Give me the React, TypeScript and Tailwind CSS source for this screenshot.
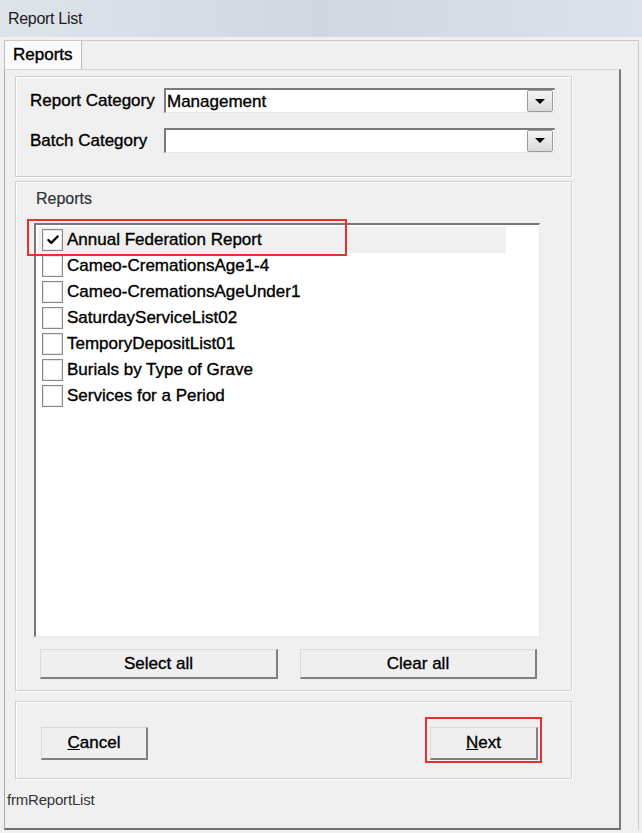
import { Check } from 'lucide-react';

const reports = [
  'Annual Federation Report',
  'Cameo-CremationsAge1-4',
  'Cameo-CremationsAgeUnder1',
  'SaturdayServiceList02',
  'TemporyDepositList01',
  'Burials by Type of Grave',
  'Services for a Period',
];

const groupBox =
  'border border-[#cfcfcf] shadow-[inset_1px_1px_0_#ffffff,1px_1px_0_#ffffff]';

const button3d =
  'flex items-center justify-center bg-[#efefef] border-t border-l border-[#d9d9d9] border-r-2 border-b-2 border-r-[#808080] border-b-[#808080] text-[17px] text-black';

function Combo({ value }: { value: string }) {
  return (
    <div className="flex items-center w-[391px] bg-white border-t-2 border-l-2 border-[#7c7c7c] border-r border-b border-r-[#e6e6e6] border-b-[#e6e6e6]">
      <div className="flex-1 pl-[1px] text-[17px] text-black leading-none">{value}</div>
      <div className="w-[26px] h-[22px] mr-[1px] flex items-center justify-center rounded-[2px] border border-[#9c9c9c] bg-gradient-to-b from-[#f6f6f6] to-[#dadada]">
        <div className="w-0 h-0 border-l-[5px] border-r-[5px] border-t-[5px] border-l-transparent border-r-transparent border-t-black" />
      </div>
    </div>
  );
}

export default function App() {
  const fontStyle = { fontFamily: '"Liberation Sans", Arial, sans-serif' };

  return (
    <div className="relative w-[642px] h-[833px] overflow-hidden bg-[#f0f0f0]" style={fontStyle}>
      {/* Title bar */}
      <div className="h-[37px] flex items-center pl-2 bg-gradient-to-r from-[#dfe4eb] via-[#d1d8e1] to-[#dce2ea] text-[16px] tracking-[-0.3px] text-[#1c1c1c]">
        Report List
      </div>

      {/* Outer panel */}
      <div className="ml-[4px] mt-[3px] w-[635px] h-[790px] flex flex-col border-t border-r border-[#c9c9c9]">
        {/* Tab header */}
        <div className="h-[28px] flex">
          <div className="w-[78px] h-[28px] flex items-center pl-[8px] bg-[#fbfbfb] border-l border-r border-[#bdbdbd] text-[17px] text-black [-webkit-text-stroke:0.4px_#000]">
            Reports
          </div>
        </div>

        {/* Tab page */}
        <div className="w-[617px] flex-1 flex flex-col border-t border-t-[#d4d4d4] border-l border-l-[#a8a8a8] border-r-2 border-r-[#7a7a7a] border-b-2 border-b-[#707070]">
          <div className="flex flex-col [-webkit-text-stroke:0.35px_#000]">
            {/* Categories */}
            <div className={`ml-[10px] mt-[6px] w-[557px] h-[101px] pl-[14px] pt-[11px] flex flex-col gap-[14px] ${groupBox}`}>
              <div className="flex items-center">
                <div className="w-[134px] text-[17px] text-black">Report Category</div>
                <Combo value="Management" />
              </div>
              <div className="flex items-center">
                <div className="w-[134px] text-[17px] text-black">Batch Category</div>
                <Combo value="" />
              </div>
            </div>

            {/* Reports */}
            <div className={`ml-[10px] mt-[4px] w-[557px] h-[510px] flex flex-col ${groupBox}`}>
              <div className="pl-[20px] pt-[8px] text-[16px] leading-[18px] text-[#30343a] [-webkit-text-stroke:0.2px_#30343a]">Reports</div>
              <div className="ml-[18px] mt-[15px] w-[506px] h-[414px] bg-white border-t-2 border-l-2 border-[#777777] border-r border-b border-r-[#e8e8e8] border-b-[#e8e8e8] pt-[2px]">
                {reports.map((name, i) => (
                  <div
                    key={name}
                    className={`ml-[2px] w-[468px] h-[26px] flex items-center pl-[4px] gap-[4px] ${
                      i === 0 ? 'bg-[#f0f0f0]' : ''
                    }`}
                  >
                    <div className="w-[21px] h-[22px] flex items-center justify-center bg-white border border-[#8a8a8a] shadow-[inset_0_0_0_1px_#e6e6e6]">
                      {i === 0 && <Check className="w-[14px] h-[14px] text-black" strokeWidth={4} />}
                    </div>
                    <span className="text-[17px] text-black">{name}</span>
                  </div>
                ))}
              </div>
              <div className="flex mt-[12px] ml-[24px] gap-[22px]">
                <div className={`w-[238px] h-[30px] ${button3d}`}>Select all</div>
                <div className={`w-[237px] h-[30px] ${button3d}`}>Clear all</div>
              </div>
            </div>

            {/* Actions */}
            <div className={`ml-[10px] mt-[10px] w-[557px] h-[78px] flex items-start justify-between pl-[25px] pr-[33px] pt-[25px] ${groupBox}`}>
              <div className={`w-[107px] h-[33px] ${button3d}`}>
                <span>
                  <span className="underline">C</span>ancel
                </span>
              </div>
              <div className={`w-[108px] h-[33px] ${button3d}`}>
                <span>
                  <span className="underline">N</span>ext
                </span>
              </div>
            </div>
          </div>

          <div className="ml-[2px] mt-[12px] text-[15px] leading-[18px] tracking-[-0.2px] text-[#333333]">frmReportList</div>
        </div>
      </div>

      {/* Red annotation boxes */}
      <div className="absolute left-[27px] top-[219px] w-[320px] h-[37px] border-2 border-[#e8302c]" />
      <div className="absolute left-[425px] top-[717px] w-[117px] h-[46px] border-2 border-[#e8302c]" />
    </div>
  );
}
